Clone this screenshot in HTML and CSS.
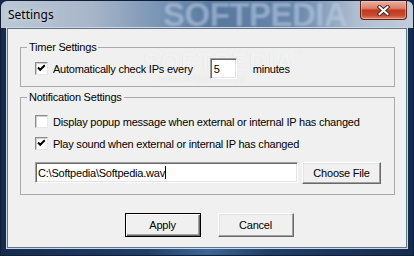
FILE: index.html
```html
<!DOCTYPE html>
<html lang="en">
<head>
  <meta charset="UTF-8" />
  <title>Settings</title>
  <link rel="stylesheet" href="styles.css">
</head>
<body>
  <div class="window">
    <div class="titlebar">
      <span class="title">Settings</span>
      <span class="title-mark">SOFTPEDIA</span>
      <span class="close">
        <svg width="13" height="11" viewBox="0 0 13 11">
          <path d="M2.5 2 L10.5 9 M10.5 2 L2.5 9" stroke="#4a2a26" stroke-width="4" stroke-linecap="square" fill="none"/>
          <path d="M2.5 2 L10.5 9 M10.5 2 L2.5 9" stroke="#fff" stroke-width="2" stroke-linecap="square" fill="none"/>
        </svg>
      </span>
    </div>

    <div class="client">
      <div class="mark">SOFTPEDIA<sup>™</sup><small>www.softpedia.com</small></div>

      <fieldset class="group">
        <legend>Timer Settings</legend>
        <div class="row">
          <span class="check"><svg width="11" height="11" viewBox="0 0 11 11"><polyline points="2,4.5 4.2,6.8 8.8,2.2" stroke="#000" stroke-width="2" fill="none"/></svg></span>
          <span class="label">Automatically check IPs every</span>
          <span class="edit minutes-box">5</span>
          <span class="label after">minutes</span>
        </div>
      </fieldset>

      <fieldset class="group notify">
        <legend>Notification Settings</legend>
        <div class="row small">
          <span class="check"></span>
          <span class="label">Display popup message when external or internal IP has changed</span>
        </div>
        <div class="row small second">
          <span class="check"><svg width="11" height="11" viewBox="0 0 11 11"><polyline points="2,4.5 4.2,6.8 8.8,2.2" stroke="#000" stroke-width="2" fill="none"/></svg></span>
          <span class="label">Play sound when external or internal IP has changed</span>
        </div>
        <div class="file-row">
          <span class="edit path">C:\Softpedia\Softpedia.wav<i class="caret"></i></span>
          <span class="btn choose">Choose File</span>
        </div>
      </fieldset>

      <div class="actions">
        <span class="btn default">Apply</span>
        <span class="btn">Cancel</span>
      </div>
    </div>
  </div>
</body>
</html>
```

FILE: styles.css
```css
* {
  box-sizing: border-box;
  margin: 0;
  padding: 0;
}

body {
  width: 414px;
  height: 256px;
  overflow: hidden;
  background-color: #16294a;
  font-family: "Liberation Sans", Arial, sans-serif;
  font-size: 11px;
  letter-spacing: -0.22px;
  color: #000;
}

.window {
  position: relative;
  width: 414px;
  height: 256px;
  display: flex;
  flex-direction: column;
  padding-bottom: 7px;
  border: 1px solid #0f1d36;
  border-radius: 7px 7px 0 0;
  background: linear-gradient(90deg, #152b4d 0%, #1f3d66 35%, #3a6797 50%, #1f3d66 65%, #152b4d 100%);
  overflow: hidden;
}

/* title bar */
.titlebar {
  position: relative;
  height: 27px;
  display: flex;
  align-items: flex-start;
  background: linear-gradient(90deg, #bcc8d6 0%, #a7b6c9 22%, #7a95b6 38%, #57779e 52%, #6a88ad 72%, #aebdcf 86%, #c2cddb 100%);
  overflow: hidden;
}

.title {
  margin: 6px 0 0 7px;
  font-family: "Noto Sans", "Open Sans", sans-serif;
  font-size: 12px;
  letter-spacing: 0;
  line-height: 16px;
  color: #000;
  text-shadow: 0 0 6px rgba(255, 255, 255, 0.8);
  z-index: 1;
}

.title-mark {
  position: absolute;
  left: 162px;
  top: -4px;
  font-weight: bold;
  font-size: 33px;
  letter-spacing: -0.5px;
  line-height: 36px;
  color: rgba(190, 208, 230, 0.55);
  filter: blur(0.8px);
}

.close {
  position: relative;
  margin-left: auto;
  margin-right: 6px;
  width: 47px;
  height: 19px;
  display: flex;
  align-items: center;
  justify-content: center;
  border: 1px solid #5e2418;
  border-top: none;
  border-radius: 0 0 4px 4px;
  background: linear-gradient(180deg, #eab1a2 0%, #dc806a 40%, #c2391f 52%, #c84a2e 80%, #e28b6c 100%);
  box-shadow: inset 0 0 0 1px rgba(255, 210, 200, 0.45);
}

/* dialog body */
.client {
  position: relative;
  flex: 1;
  display: flex;
  flex-direction: column;
  margin: 0 6px;
  padding: 12px 11px 0 12px;
  background-color: #f0f0f0;
  border: 1px solid #62748a;
  box-shadow: 0 0 0 1px #cbd7e4;
}

.mark {
  position: absolute;
  left: 135px;
  top: 19px;
  font-weight: bold;
  font-size: 25px;
  letter-spacing: 1px;
  color: rgba(255, 255, 255, 0.7);
  text-shadow: 0 0 1px rgba(0, 0, 0, 0.12);
  pointer-events: none;
}

.mark sup {
  font-size: 8px;
  vertical-align: 14px;
}

.mark small {
  display: block;
  margin: -4px 0 0 16px;
  font-size: 10px;
  font-weight: normal;
  letter-spacing: 0;
}

.group {
  position: relative;
  min-width: 0;
  padding: 4px 0 7px 6px;
  border: 1px solid #a9a9a9;
}

.group legend {
  padding: 0 2px;
  line-height: 13px;
  background-color: #f0f0f0;
}

.notify {
  margin-top: 4px;
  padding: 9px 0 10px 6px;
}

.row {
  display: flex;
  align-items: center;
  height: 21px;
  padding-left: 8px;
  white-space: nowrap;
}

.row.small {
  height: 17px;
}

.row.second {
  margin-top: 5px;
}

.label {
  margin-left: 5px;
}

.label.after {
  margin-left: 16px;
}

.check {
  width: 13px;
  height: 13px;
  display: flex;
  background-color: #fff;
  border: 1px solid;
  border-color: #8a8a8a #e6e6e6 #e6e6e6 #8a8a8a;
  box-shadow: inset 1px 1px 0 #cfcfcf;
}

.edit {
  display: flex;
  align-items: center;
  height: 21px;
  padding-left: 2px;
  background-color: #fff;
  border: 1px solid;
  border-color: #a0a0a0 #fff #fff #a0a0a0;
  box-shadow: inset 1px 1px 0 #696969, inset -1px -1px 0 #e3e3e3;
  white-space: nowrap;
}

.minutes-box {
  width: 27px;
  margin-left: 17px;
  padding-left: 3px;
}

.file-row {
  display: flex;
  align-items: flex-start;
  margin-top: 10px;
  padding-left: 8px;
}

.path {
  width: 263px;
  padding-left: 2px;
}

.caret {
  display: inline-block;
  width: 1px;
  height: 13px;
  background-color: #000;
}

.btn {
  display: flex;
  align-items: center;
  justify-content: center;
  width: 76px;
  height: 24px;
  background-color: #f0f0f0;
  border: 1px solid;
  border-color: #fff #696969 #696969 #fff;
  box-shadow: inset -1px -1px 0 #a0a0a0, inset 1px 1px 0 #e3e3e3;
}

.btn.default {
  border-color: #000;
  box-shadow: inset 1px 1px 0 #fff, inset -1px -1px 0 #696969, inset -2px -2px 0 #a0a0a0;
}

.choose {
  width: 79px;
  height: 22px;
  margin-left: 4px;
}

.actions {
  display: flex;
  justify-content: center;
  gap: 17px;
  margin-top: 18px;
  padding-left: 3px;
}
```
